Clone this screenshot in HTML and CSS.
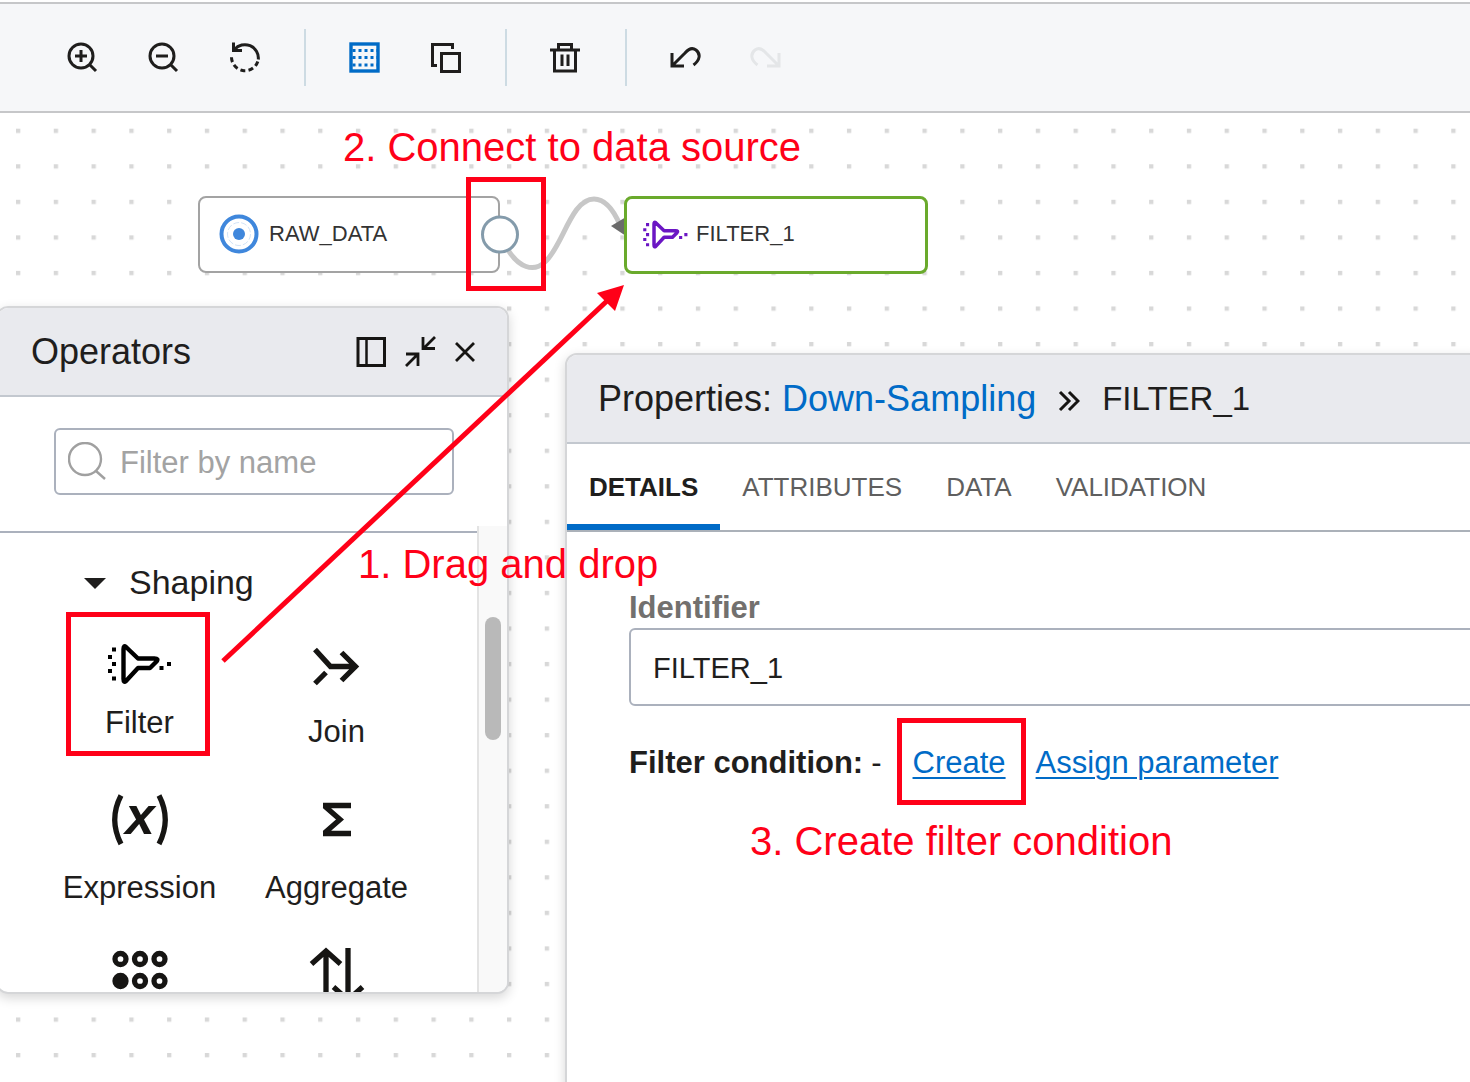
FILE: index.html
```html
<!DOCTYPE html>
<html lang="en">
<head>
<meta charset="utf-8">
<meta name="viewport" content="width=device-width, initial-scale=1">
<title>Data flow editor</title>
<link rel="stylesheet" href="styles.css">
</head>
<body>
<header class="toolbar" role="toolbar" aria-label="Canvas tools">
  <button class="tool" type="button" aria-label="Zoom in"><svg class="tool-icon" viewBox="0 0 32 32"><circle cx="15" cy="15" r="12"/><path d="M9 15H21M15 9V21M24 24L30 30"/></svg></button>
  <button class="tool" type="button" aria-label="Zoom out"><svg class="tool-icon" viewBox="0 0 32 32"><circle cx="15" cy="15" r="12"/><path d="M9 15H21M24 24L30 30"/></svg></button>
  <button class="tool" type="button" aria-label="Reset zoom"><svg class="tool-icon" viewBox="0 0 32 32"><path d="M5.500 1.500V9.500H14M6.500 8.500A13.500 13.500 0 0 1 30.300 18.500"/><path d="M29.800 20.500A13.500 13.500 0 0 1 3.500 16" stroke-dasharray="5 3.200"/></svg></button>
  <span class="separator"></span>
  <button class="tool tool-active" type="button" aria-label="Show grid"><svg class="tool-icon" viewBox="0 0 32 32"><rect x="3" y="3" width="27" height="27" stroke-width="3.400"/><path d="M4.500 9.500H29M4.500 16.500H29M4.500 24H29" stroke-dasharray="3 3"/></svg></button>
  <button class="tool" type="button" aria-label="Copy"><svg class="tool-icon" viewBox="0 0 32 32"><path d="M23.500 8V3.500H3.500V24.500H8"/><rect x="12.500" y="12.500" width="18" height="18"/></svg></button>
  <span class="separator"></span>
  <button class="tool" type="button" aria-label="Delete"><svg class="tool-icon" viewBox="0 0 32 32"><path d="M1 9H31M9.500 9V3.500H22.500V9M5.500 9V30H26.500V9M13 13.500V25M19 13.500V25"/></svg></button>
  <span class="separator"></span>
  <button class="tool" type="button" aria-label="Undo"><svg class="tool-icon" viewBox="0 0 32 32"><path d="M3 12V25H15M3.500 24.500L16 12C19 8.500 23 6 27 9C32 13 31 19 24.500 24"/></svg></button>
  <button class="tool" type="button" aria-label="Redo" disabled><svg class="tool-icon" viewBox="0 0 32 32"><path d="M29 12V25H17M28.500 24.500L16 12C13 8.500 9 6 5 9C0 13 1 19 7.500 24"/></svg></button>
</header>

<main class="canvas">
  <svg class="layer" aria-hidden="true">
    <defs>
      <pattern id="dots" x="16" y="15.700" width="37.770" height="35.550" patternUnits="userSpaceOnUse"><rect width="4.300" height="4.300" fill="#d8d8d8"/></pattern>
    </defs>
    <rect width="100%" height="100%" fill="url(#dots)"/>
  </svg>

  <div class="node node-source">
    <svg class="source-icon" viewBox="0 0 40 40"><circle cx="20" cy="20" r="17.500" fill="#fff" stroke="#3f87dc" stroke-width="4"/><circle cx="20" cy="20" r="11.500" fill="none" stroke="#d3e4f7" stroke-dasharray="6 2"/><circle cx="20" cy="20" r="6" fill="#3f87dc"/></svg>
    <span>RAW_DATA</span>
  </div>

  <svg class="layer" aria-hidden="true">
    <g transform="translate(0 -113)">
      <path d="M508 250C519 267 533 273 545 262C563 246 571 199 594 199C606 199 614 211 620 225" fill="none" stroke="#c7c7c7" stroke-width="5"/>
      <path d="M611 226L626 217V236Z" fill="#6b6b6b"/>
      <circle cx="500" cy="234.500" r="17.500" fill="#fff" stroke="#849bab" stroke-width="3"/>
    </g>
  </svg>

  <div class="node node-filter">
    <svg class="filter-icon" viewBox="0 4 64 56"><g fill="currentColor"><path d="M4 15.500h4.500v4.500h-4.500zM0 23h4.500v4.500h-4.500zM4 30h4.500v4.500h-4.500zM0 37h4.500v4.500h-4.500zM4 44.500h4.500v4.500h-4.500zM51.500 34h4.500v4.500h-4.500zM59 30h4.500v4.500h-4.500z"/></g><path d="M15.500 17Q15.500 13 18 15L30 26.500H46.500Q51 26.500 48.500 29.500L42 36H30L18 49Q15.500 51 15.500 47Z" fill="none" stroke="currentColor" stroke-width="5" stroke-linejoin="round"/></svg>
    <span>FILTER_1</span>
  </div>

  <section class="panel operators" aria-labelledby="operators-title">
    <div class="panel-header">
      <h2 class="panel-title" id="operators-title">Operators</h2>
      <div class="panel-actions">
        <button class="icon-button" type="button" aria-label="Dock panel"><svg width="32" height="32" viewBox="0 0 32 32"><path d="M3 2.500H29.500V29.500H3Z" stroke-width="3"/><path d="M11.500 3V29" stroke-width="2.500"/></svg></button>
        <button class="icon-button" type="button" aria-label="Collapse panel"><svg width="32" height="32" viewBox="0 0 32 32"><path d="M19 1V12.500H31M20 12L31 1M2 18H14V30M13 19L2 30"/></svg></button>
        <button class="icon-button" type="button" aria-label="Close panel"><svg width="24" height="32" viewBox="0 0 24 32"><path d="M3 7L21 25M21 7L3 25"/></svg></button>
      </div>
    </div>
    <label class="search">
      <svg width="40" height="40" viewBox="0 0 40 40" aria-hidden="true"><circle cx="17" cy="17" r="16"/><path d="M28 29L37 37"/></svg>
      <input class="search-input" type="text" placeholder="Filter by name" aria-label="Filter by name">
    </label>
    <div class="list-area">
      <div class="list">
        <button class="group" type="button" aria-expanded="true"><span class="caret"></span>Shaping</button>
        <div class="operator-grid">
          <button class="operator" type="button">
            <svg width="64" height="55" viewBox="0 0 64 55"><path class="specks" d="M4 15.500h4v4h-4zM0 23h4v4h-4zM4 30h4v4h-4zM0 37h4v4h-4zM4 44.500h4v4h-4zM51.500 34h4v4h-4zM59 30h4v4h-4z"/><path d="M15.500 17Q15.500 13 18 15L30 26.500H46.500Q51 26.500 48.500 29.500L42 36H30L18 49Q15.500 51 15.500 47Z" stroke="#000" stroke-width="4.400" stroke-linejoin="round"/></svg>
            <span>Filter</span>
          </button>
          <button class="operator" type="button">
            <svg width="64" height="64" viewBox="0 0 64 64"><path d="M10 17.500L25.500 34.500H50M36.500 20.500L50.500 34.500L36.500 48.500M10 51.500L21 40.500"/></svg>
            <span>Join</span>
          </button>
          <button class="operator" type="button">
            <svg width="64" height="64" viewBox="0 0 64 64" aria-hidden="true"><path d="M13 7.500Q0.500 31.500 13 56M51 7.500Q63.500 31.500 51 56"/><text class="variable" x="32" y="46" text-anchor="middle">x</text></svg>
            <span>Expression</span>
          </button>
          <button class="operator" type="button">
            <svg width="64" height="64" viewBox="0 0 64 64"><path d="M18 17.500H46M18 45.500H46M19.500 18L35 31.500L19.500 45"/></svg>
            <span>Aggregate</span>
          </button>
          <button class="operator" type="button" aria-label="Pivot">
            <svg width="64" height="64" viewBox="0 0 64 64"><circle cx="12.500" cy="15" r="5.500"/><circle cx="32" cy="15" r="5.500"/><circle cx="51.500" cy="15" r="5.500"/><circle cx="12.500" cy="37" r="5.500" fill="#161513"/><circle cx="32" cy="37" r="5.500"/><circle cx="51.500" cy="37" r="5.500"/></svg>
          </button>
          <button class="operator" type="button" aria-label="Sort">
            <svg width="64" height="64" viewBox="0 0 64 64"><path d="M21 8V62M6.500 20L21 7L35.500 20M43 4V56M28.500 43L43 56L57.500 43"/></svg>
          </button>
        </div>
      </div>
      <div class="scrollbar"><div class="thumb"></div></div>
    </div>
  </section>

  <section class="panel properties" aria-label="Properties">
    <div class="panel-header">
      <h2 class="panel-title">Properties: <a class="crumb" href="#">Down-Sampling</a></h2>
      <svg class="chevrons" viewBox="0 0 22 22" aria-hidden="true"><path d="M2 2L11 11L2 20M11 2L20 11L11 20"/></svg>
      <span class="panel-object">FILTER_1</span>
    </div>
    <div class="tabs" role="tablist">
      <button class="tab tab-selected" type="button" role="tab" aria-selected="true">DETAILS</button>
      <button class="tab" type="button" role="tab" aria-selected="false">ATTRIBUTES</button>
      <button class="tab" type="button" role="tab" aria-selected="false">DATA</button>
      <button class="tab" type="button" role="tab" aria-selected="false">VALIDATION</button>
    </div>
    <div class="form">
      <label class="field-label" for="identifier">Identifier</label>
      <input class="field" id="identifier" type="text" value="FILTER_1">
      <div class="condition">
        <b>Filter condition:</b><span>-</span>
        <a class="link link-create" href="#">Create</a>
        <a class="link" href="#">Assign parameter</a>
      </div>
    </div>
  </section>

  <svg class="layer" aria-hidden="true">
    <g transform="translate(0 -113)">
      <path d="M223 661L608 300" stroke="#ff0018" stroke-width="5"/>
      <path d="M624 285L597 293L615 311Z" fill="#ff0018"/>
    </g>
  </svg>
  <div class="mark mark-port"></div>
  <div class="mark mark-operator"></div>
  <div class="mark mark-create"></div>
  <span class="step step-drag">1. Drag and drop</span>
  <span class="step step-connect">2. Connect to data source</span>
  <span class="step step-create">3. Create filter condition</span>
</main>
</body>
</html>
```

FILE: styles.css
```css
* { box-sizing: border-box; }

body {
  margin: 0;
  min-height: 100vh;
  display: flex;
  flex-direction: column;
  background: #fff;
  color: #1f1e1d;
  font-family: "Liberation Sans", Arial, sans-serif;
  font-size: 31px;
}

button {
  margin: 0;
  padding: 0;
  border: 0;
  background: none;
  color: inherit;
  font: inherit;
  cursor: pointer;
}

svg { display: block; flex: none; }

/* Toolbar */
.toolbar {
  display: flex;
  align-items: center;
  height: 111px;
  margin-top: 2px;
  padding-left: 41px;
  border-top: 2px solid #c6c7c9;
  border-bottom: 2px solid #c6c7c9;
  background: #f6f7f9;
}

.tool {
  display: flex;
  justify-content: center;
  width: 81px;
  padding-bottom: 2px;
}

.tool-active { color: #006bc7; }
.tool:disabled { color: #e4e6e8; }

.tool-icon {
  width: 32px;
  height: 32px;
  fill: none;
  stroke: currentColor;
  stroke-width: 3;
}

.separator {
  width: 2px;
  height: 57px;
  margin: 0 18px 0 20px;
  background: #cddbe3;
}

.separator + .tool { margin-left: -1px; }

/* Canvas */
.canvas {
  position: relative;
  flex: 1;
  min-height: 900px;
  overflow: hidden;
}

.layer {
  position: absolute;
  inset: 0;
  width: 100%;
  height: 100%;
  pointer-events: none;
}

.node {
  position: absolute;
  display: flex;
  align-items: center;
  padding-bottom: 2px;
  border-radius: 8px;
  background: #fff;
  color: #333;
  font-size: 22px;
}

.node-source {
  left: 198px;
  top: 83px;
  width: 302px;
  height: 77px;
  padding-left: 19px;
  gap: 10px;
  border: 2px solid #a3a3a3;
}

.node-filter {
  left: 624px;
  top: 83px;
  width: 304px;
  height: 78px;
  padding-left: 16px;
  gap: 8px;
  border: 3px solid #6aaa2c;
}

.source-icon { width: 40px; height: 40px; }
.filter-icon { width: 45px; height: 39px; color: #6b16c4; }

/* Panels */
.panel {
  position: absolute;
  border: 2px solid #d5d6d8;
  background: #fff;
  box-shadow: 0 4px 12px rgba(0, 0, 0, 0.16);
}

.panel-header {
  display: flex;
  align-items: center;
  height: 89px;
  border-bottom: 2px solid #c3c8cf;
  background: #e9eaee;
}

.panel-title {
  margin: 0;
  font-size: 36px;
  font-weight: 400;
}

.operators {
  left: -4px;
  top: 193px;
  width: 513px;
  border-radius: 12px;
  overflow: hidden;
}

.operators .panel-header { padding: 0 30px 0 33px; }

.panel-actions {
  display: flex;
  gap: 17px;
  margin-left: auto;
}

.icon-button svg {
  fill: none;
  stroke: #161513;
  stroke-width: 2.8;
}

.search {
  display: flex;
  align-items: center;
  gap: 12px;
  width: 400px;
  height: 67px;
  margin: 31px 0 31px 56px;
  padding: 0 12px;
  border: 2px solid #abb1bd;
  border-radius: 6px;
}

.search svg { fill: none; stroke: #a0a0a0; stroke-width: 2.4; }

.search-input {
  min-width: 0;
  flex: 1;
  padding: 2px 0 0;
  border: 0;
  outline: 0;
  background: none;
  font: inherit;
}

.search-input::placeholder { color: #a3a3a3; opacity: 1; }

.list-area {
  display: flex;
  height: 466px;
}

.list {
  flex: 1;
  margin-top: 5px;
  padding-left: 2px;
  border-top: 2px solid #abb1bd;
  overflow: hidden;
}

.group {
  display: flex;
  align-items: center;
  gap: 23px;
  margin: 29px 0 30px 84px;
  font-size: 34px;
  line-height: 40px;
}

.caret {
  margin-top: 2px;
  border: 11px solid transparent;
  border-top-color: #1f1e1d;
  border-bottom: 0;
}

.operator-grid {
  display: grid;
  grid-template-columns: 197px 197px;
  grid-auto-rows: 156px;
  margin-left: 41px;
}

.operator {
  display: flex;
  flex-direction: column;
  align-items: center;
  gap: 18px;
  line-height: 36px;
}

.operator svg {
  overflow: visible;
  fill: none;
  stroke: #161513;
  stroke-width: 5.3;
}

.operator .specks { fill: #000; stroke: none; }

.operator .variable {
  fill: #161513;
  stroke: none;
  font: italic 700 53px "Liberation Sans", Arial, sans-serif;
}

.scrollbar {
  width: 30px;
  padding: 91px 6px 0;
  border-left: 2px solid #e3e3e3;
  background: #f9f9f9;
}

.thumb {
  width: 16px;
  height: 123px;
  border-radius: 8px;
  background: #b9b9b9;
}

/* Properties */
.properties {
  left: 565px;
  right: -12px;
  top: 240px;
  bottom: -12px;
  border-radius: 12px;
}

.properties .panel-header {
  padding: 0 31px;
  border-radius: 10px 10px 0 0;
}

.crumb { color: #006bc7; text-decoration: none; }

.chevrons {
  width: 22px;
  height: 22px;
  margin: 4px 22px 0;
  fill: none;
  stroke: #161513;
  stroke-width: 3;
}

.panel-object { font-size: 33px; }

.tabs {
  display: flex;
  height: 88px;
  border-bottom: 2px solid #abb1b9;
}

.tab {
  padding: 6px 22px 0;
  border-bottom: 6px solid transparent;
  color: #5f5f5f;
  font-size: 26px;
}

.tab-selected {
  border-bottom-color: #006bc7;
  color: #1f1e1d;
  font-weight: 700;
}

.form { padding: 58px 0 0 62px; }

.field-label {
  display: block;
  color: #72706e;
  font-weight: 700;
  line-height: 36px;
}

.field {
  display: block;
  width: 100%;
  height: 78px;
  margin-top: 2px;
  padding: 2px 22px 0;
  border: 2px solid #abb1bd;
  border-radius: 6px;
  color: #1f1e1d;
  font: inherit;
  font-size: 29px;
}

.condition {
  display: flex;
  gap: 8px;
  margin-top: 39px;
  line-height: 36px;
}

.link {
  color: #006bc7;
  text-decoration-thickness: 2px;
  text-underline-offset: 4px;
}

.link-create { margin: 0 22px 0 23px; }

/* Step annotations */
.mark {
  position: absolute;
  border: 5px solid #ff0018;
  pointer-events: none;
}

.mark-port { left: 466px; top: 64px; width: 80px; height: 114px; }
.mark-operator { left: 66px; top: 499px; width: 144px; height: 144px; }
.mark-create { left: 897px; top: 605px; width: 129px; height: 87px; }

.step {
  position: absolute;
  color: #ff0018;
  font-size: 40px;
  line-height: 46px;
  white-space: nowrap;
}

.step-drag { left: 358px; top: 428px; }
.step-connect { left: 343px; top: 11px; }
.step-create { left: 750px; top: 705px; }
```
